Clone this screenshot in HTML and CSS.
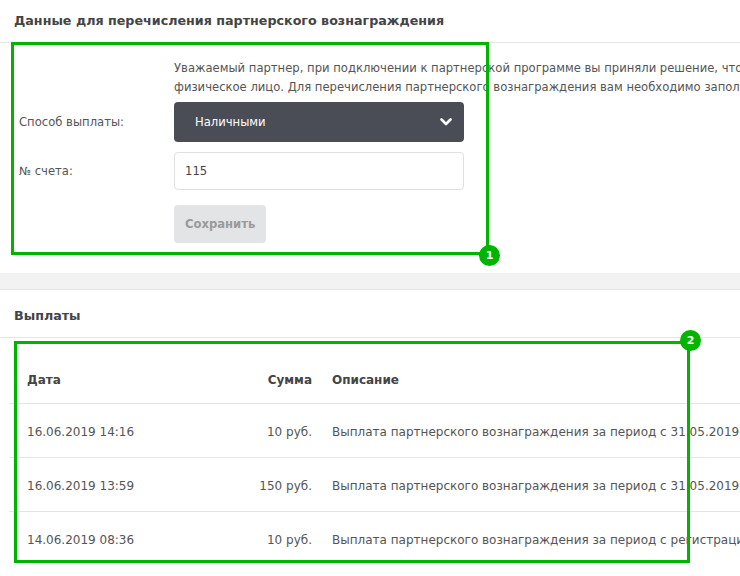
FILE: index.html
```html
<!DOCTYPE html>
<html lang="ru">
<head>
    <meta charset="UTF-8">
    <title>Партнерская программа</title>
    <link rel="stylesheet" href="styles.css">
</head>
<body>

    <div class="panel">
        <h2 class="panel-title">Данные для перечисления партнерского вознаграждения</h2>
        <div class="panel-body payout-form">
            <p class="intro">Уважаемый партнер, при подключении к партнерской программе вы приняли решение, что будете получать вознаграждение как<br>физическое лицо. Для перечисления партнерского вознаграждения вам необходимо заполнить форму ниже.</p>

            <div class="form-row">
                <label>Способ выплаты:</label>
                <div class="select">
                    <span>Наличными</span>
                    <svg width="12" height="8" viewBox="0 0 12 8"><path d="M1.5 1.5 L6 6 L10.5 1.5" fill="none" stroke="#fff" stroke-width="2.6" stroke-linecap="round" stroke-linejoin="round"/></svg>
                </div>
            </div>

            <div class="form-row">
                <label>№ счета:</label>
                <div class="input">115</div>
            </div>

            <div class="form-row">
                <span></span>
                <div><button class="btn-save" disabled>Сохранить</button></div>
            </div>

            <div class="mark mark-1"><span class="badge">1</span></div>
        </div>
    </div>

    <div class="divider"></div>

    <div class="panel">
        <h2 class="panel-title panel-title-lg">Выплаты</h2>
        <div class="panel-body payouts">
            <table class="payout-table">
                <thead>
                    <tr><th>Дата</th><th class="col-sum">Сумма</th><th>Описание</th></tr>
                </thead>
                <tbody>
                    <tr><td>16.06.2019 14:16</td><td class="col-sum">10 руб.</td><td>Выплата партнерского вознаграждения за период с 31.05.2019 по 15.06.2019</td></tr>
                    <tr><td>16.06.2019 13:59</td><td class="col-sum">150 руб.</td><td>Выплата партнерского вознаграждения за период с 31.05.2019 по 15.06.2019</td></tr>
                    <tr><td>14.06.2019 08:36</td><td class="col-sum">10 руб.</td><td>Выплата партнерского вознаграждения за период с регистрации по 30.05.2019</td></tr>
                </tbody>
            </table>

            <div class="mark mark-2"><span class="badge">2</span></div>
        </div>
    </div>

</body>
</html>
```

FILE: styles.css
```css
html, body {
    overflow: hidden;
}

body {
    margin: 0;
    width: 1000px;
    font-family: 'DejaVu Sans', Verdana, sans-serif;
    font-size: 11.6px;
    color: #555;
    background: #fff;
}

.panel {
    background: #fff;
}

.panel-title {
    margin: 0;
    padding: 12px 14px 13px;
    font-size: 12.7px;
    line-height: 17px;
    font-weight: bold;
    color: #444;
    border-bottom: 1px solid #e6e6e6;
}

.panel-title-lg {
    padding-top: 17px;
}

.panel-body {
    position: relative;
}

/* form */

.payout-form {
    padding: 16px 0 20px 19px;
}

.intro {
    margin: 0 0 5px 155px;
    line-height: 19px;
    white-space: nowrap;
}

.form-row {
    display: grid;
    grid-template-columns: 155px 290px;
    align-items: center;
    margin-bottom: 10px;
}

.select {
    height: 40px;
    background: #4a4d55;
    border-radius: 4px;
    color: #fff;
    display: flex;
    align-items: center;
    justify-content: space-between;
    padding: 0 12px 0 21px;
}

.input {
    height: 36px;
    border: 1px solid #e0e0e0;
    border-radius: 4px;
    display: flex;
    align-items: center;
    padding: 0 10px;
    color: #444;
}

.btn-save {
    margin-top: 5px;
    height: 38px;
    padding: 0 11px;
    border: none;
    border-radius: 4px;
    background: #e3e4e6;
    color: #9a9a9a;
    font-family: inherit;
    font-size: 11.6px;
    font-weight: bold;
}

.divider {
    height: 16px;
    background: #f2f2f2;
    border-bottom: 1px solid #e4e4e4;
}

/* table */

.payouts {
    padding: 13px 0 0 9px;
}

.payout-table {
    border-collapse: collapse;
    width: 990px;
    font-size: 12px;
}

.payout-table th,
.payout-table td {
    padding: 20px 10px 16px;
    line-height: 17px;
    text-align: left;
    white-space: nowrap;
    border-bottom: 1px solid #e4e4e4;
}

.payout-table thead th {
    padding-top: 21px;
    padding-bottom: 14px;
    font-weight: bold;
    color: #444;
}

.payout-table tbody tr:last-child td {
    border-bottom: none;
}

.payout-table th:first-child,
.payout-table td:first-child {
    padding-left: 18px;
    width: 190px;
}

.payout-table .col-sum {
    text-align: right;
    width: 75px;
}

/* annotation marks */

.mark {
    position: absolute;
    border: 3px solid #00b400;
}

.mark-1 {
    left: 11px;
    top: -1px;
    width: 472px;
    height: 207px;
}

.mark-2 {
    left: 14px;
    top: 3px;
    width: 670px;
    height: 216px;
}

.badge {
    position: absolute;
    width: 21px;
    height: 21px;
    border-radius: 50%;
    background: #00b400;
    color: #fff;
    font-size: 11px;
    font-weight: bold;
    line-height: 21px;
    text-align: center;
}

.mark-1 .badge {
    right: -14px;
    bottom: -14px;
}

.mark-2 .badge {
    right: -14px;
    top: -14px;
}
```
